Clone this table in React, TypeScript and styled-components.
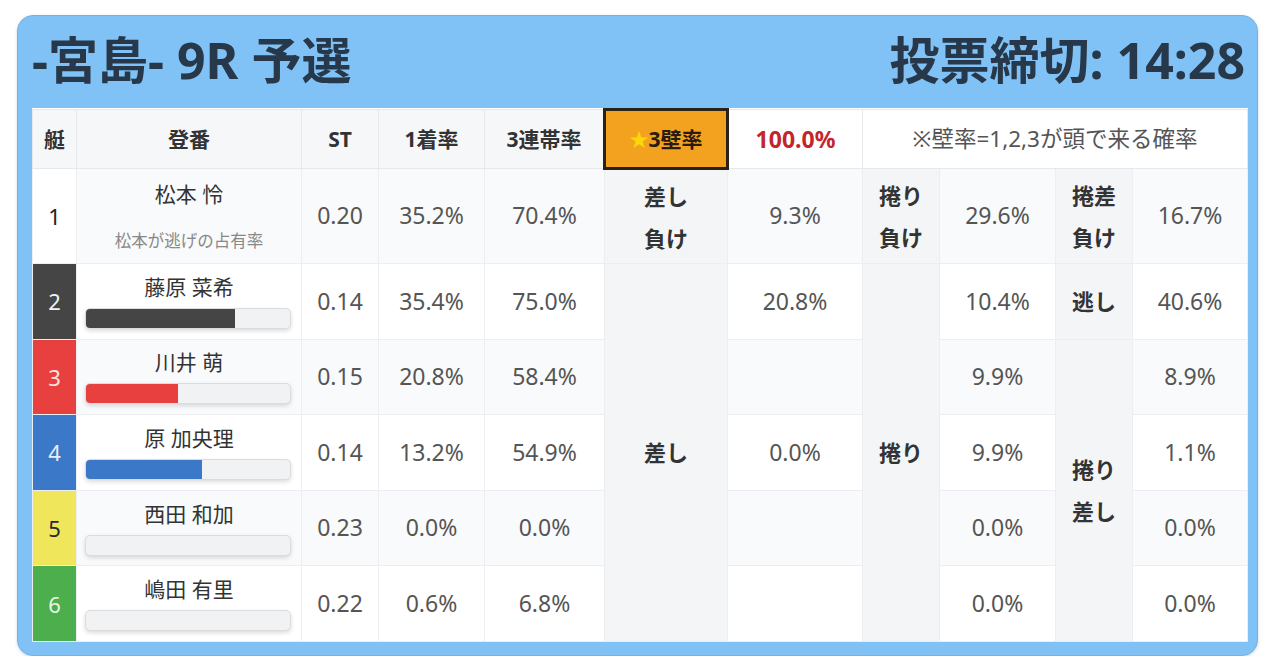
import React from "react";
import styled, { createGlobalStyle } from "styled-components";

const GlobalStyle = createGlobalStyle`
  body {
    margin: 0;
    background: #ffffff;
    font-family: "Noto Sans", "Noto Sans CJK JP", sans-serif;
  }
`;

const boatColors: Record<number, { bg: string; fg: string }> = {
  1: { bg: "#ffffff", fg: "#222222" },
  2: { bg: "#454545", fg: "#f2f2f2" },
  3: { bg: "#e8403f", fg: "#fbe3e3" },
  4: { bg: "#3b78c8", fg: "#e6eefa" },
  5: { bg: "#f0e65c", fg: "#2a2a2a" },
  6: { bg: "#4cae4c", fg: "#e6f6e6" },
};

interface Racer {
  no: number;
  name: string;
  st: string;
  first: string;
  third: string;
  bar?: number;
  sashi?: string;
  makuri: string;
  side: string;
}

const racers: Racer[] = [
  { no: 1, name: "松本 怜", st: "0.20", first: "35.2%", third: "70.4%", sashi: "9.3%", makuri: "29.6%", side: "16.7%" },
  { no: 2, name: "藤原 菜希", st: "0.14", first: "35.4%", third: "75.0%", bar: 73, sashi: "20.8%", makuri: "10.4%", side: "40.6%" },
  { no: 3, name: "川井 萌", st: "0.15", first: "20.8%", third: "58.4%", bar: 45, sashi: "", makuri: "9.9%", side: "8.9%" },
  { no: 4, name: "原 加央理", st: "0.14", first: "13.2%", third: "54.9%", bar: 57, sashi: "0.0%", makuri: "9.9%", side: "1.1%" },
  { no: 5, name: "西田 和加", st: "0.23", first: "0.0%", third: "0.0%", bar: 0, sashi: "", makuri: "0.0%", side: "0.0%" },
  { no: 6, name: "嶋田 有里", st: "0.22", first: "0.6%", third: "6.8%", bar: 0, sashi: "", makuri: "0.0%", side: "0.0%" },
];

const colWidths = [44, 225, 77, 106, 120, 123, 135, 77, 116, 77, 115];

const App = () => {
  return (
    <>
      <GlobalStyle />
      <Card>
        <TitleBar>
          <Title>-宮島- 9R 予選</Title>
          <Title>投票締切: 14:28</Title>
        </TitleBar>
        <Table>
          <colgroup>
            {colWidths.map((w, i) => (
              <col key={i} style={{ width: w }} />
            ))}
          </colgroup>
          <thead>
            <tr>
              <Th>艇</Th>
              <Th>登番</Th>
              <Th>ST</Th>
              <Th>1着率</Th>
              <Th>3連帯率</Th>
              <HighlightTh>
                <Star>★</Star>3壁率
              </HighlightTh>
              <RateTh>100.0%</RateTh>
              <NoteTh colSpan={4}>※壁率=1,2,3が頭で来る確率</NoteTh>
            </tr>
          </thead>
          <tbody>
            {racers.map((r, i) => {
              const odd = i % 2 === 0;
              const first = i === 0;
              return (
                <Row key={r.no} $tall={first}>
                  <BoatCell $bg={boatColors[r.no].bg} $fg={boatColors[r.no].fg}>
                    {r.no}
                  </BoatCell>
                  <Td $odd={odd}>
                    <Name>{r.name}</Name>
                    {first ? (
                      <SubNote>松本が逃げの占有率</SubNote>
                    ) : (
                      <Bar>
                        <BarFill $color={boatColors[r.no].bg} style={{ width: `${r.bar}%` }} />
                      </Bar>
                    )}
                  </Td>
                  <Td $odd={odd}>{r.st}</Td>
                  <Td $odd={odd}>{r.first}</Td>
                  <Td $odd={odd}>{r.third}</Td>
                  {first && (
                    <LabelTd>
                      差し
                      <br />
                      負け
                    </LabelTd>
                  )}
                  {i === 1 && <LabelTd rowSpan={5}>差し</LabelTd>}
                  <Td $odd={odd}>{r.sashi}</Td>
                  {first && (
                    <LabelTd>
                      捲り
                      <br />
                      負け
                    </LabelTd>
                  )}
                  {i === 1 && <LabelTd rowSpan={5}>捲り</LabelTd>}
                  <Td $odd={odd}>{r.makuri}</Td>
                  {first && (
                    <LabelTd>
                      捲差
                      <br />
                      負け
                    </LabelTd>
                  )}
                  {i === 1 && <LabelTd>逃し</LabelTd>}
                  {i === 2 && (
                    <LabelTd rowSpan={4}>
                      捲り
                      <br />
                      差し
                    </LabelTd>
                  )}
                  <Td $odd={odd}>{r.side}</Td>
                </Row>
              );
            })}
          </tbody>
        </Table>
      </Card>
    </>
  );
};

const Card = styled.div`
  margin: 15px 0 0 17px;
  width: 1241px;
  box-sizing: border-box;
  padding: 0 12px 13px 14px;
  background: #80c1f6;
  border: 1px solid #74b3e8;
  border-radius: 16px;
  box-shadow: 0 1px 3px rgba(40, 90, 140, 0.25);
`;

const TitleBar = styled.div`
  height: 92px;
  display: flex;
  align-items: center;
  justify-content: space-between;
`;

const Title = styled.h1`
  margin: 0;
  font-size: 50px;
  font-weight: 700;
  color: #263849;
  line-height: 1;
  padding-bottom: 4px;
`;

const Table = styled.table`
  width: 1215px;
  table-layout: fixed;
  border-collapse: collapse;
  background: #ffffff;
  border: 1px solid #d6ecfb;
`;

const Th = styled.th`
  height: 56px;
  padding: 0;
  background: #f6f7f9;
  border: 1px solid #e6e8eb;
  font-size: 21px;
  font-weight: 700;
  color: #333333;
  text-align: center;
  line-height: 1;
`;

const HighlightTh = styled(Th)`
  background: #f2a21e;
  border: 3px solid #2a2118;
  color: #2a1a10;
`;

const Star = styled.span`
  color: #ffd60a;
  font-size: 19px;
`;

const RateTh = styled(Th)`
  background: #ffffff;
  color: #c3262a;
  font-size: 23px;
`;

const NoteTh = styled(Th)`
  background: #ffffff;
  font-weight: 400;
  font-size: 22.5px;
  color: #555555;
`;

const Row = styled.tr<{ $tall?: boolean }>`
  height: ${(p) => (p.$tall ? "95px" : "75.6px")};
`;

const Td = styled.td<{ $odd?: boolean }>`
  padding: 0;
  background: ${(p) => (p.$odd ? "#f9fafb" : "#ffffff")};
  border: 1px solid #eceef1;
  text-align: center;
  vertical-align: middle;
  font-size: 23px;
  color: #555555;
  line-height: 1.2;
`;

const BoatCell = styled.td<{ $bg: string; $fg: string }>`
  padding: 0;
  background: ${(p) => p.$bg};
  color: ${(p) => p.$fg};
  border: 1px solid #eceef1;
  text-align: center;
  font-size: 22px;
`;

const LabelTd = styled.td`
  padding: 0;
  background: #f4f5f7;
  border: 1px solid #eceef1;
  text-align: center;
  vertical-align: middle;
  font-size: 22px;
  font-weight: 700;
  line-height: 42px;
  color: #333333;
`;

const Name = styled.div`
  font-size: 21px;
  color: #333333;
  line-height: 26px;
`;

const SubNote = styled.div`
  margin-top: 24px;
  font-size: 16.5px;
  color: #888888;
  line-height: 20px;
`;

const Bar = styled.div`
  margin: 8px 10px 0 8px;
  height: 19px;
  background: #f1f2f3;
  border: 1px solid #dcdcdc;
  border-radius: 5px;
  box-shadow: 0 2px 4px rgba(0, 0, 0, 0.14);
  overflow: hidden;
  display: flex;
`;

const BarFill = styled.div<{ $color: string }>`
  height: 100%;
  background: ${(p) => p.$color};
`;

export default App;
